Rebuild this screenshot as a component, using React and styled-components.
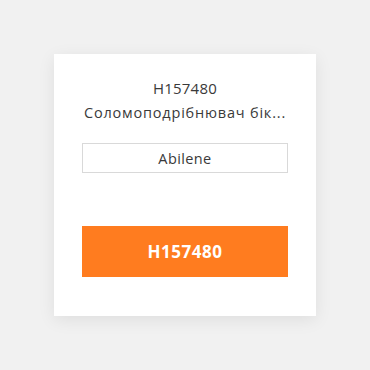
import styled, { createGlobalStyle } from "styled-components";

const Global = createGlobalStyle`
  body {
    margin: 0;
    background: #f1f1f1;
    font-family: "Open Sans", "Liberation Sans", sans-serif;
  }
`;

const Page = styled.div`
  width: 370px;
  height: 370px;
  display: flex;
  align-items: center;
  justify-content: center;
`;

const Card = styled.div`
  width: 262px;
  height: 262px;
  box-sizing: border-box;
  background: #ffffff;
  box-shadow: 0 4px 16px rgba(0, 0, 0, 0.08);
  padding: 24px 28px 0;
  display: flex;
  flex-direction: column;
  align-items: center;
`;

const Code = styled.div`
  font-size: 15px;
  color: #3a3a3a;
  line-height: 20px;
  letter-spacing: 0.2px;
`;

const Name = styled.div`
  margin-top: 5px;
  font-size: 14.5px;
  color: #3a3a3a;
  line-height: 20px;
  width: 100%;
  text-align: center;
  white-space: nowrap;
  letter-spacing: 0.8px;
`;

const Field = styled.div`
  margin-top: 20px;
  width: 100%;
  height: 30px;
  box-sizing: border-box;
  border: 1px solid #d9d9d9;
  display: flex;
  align-items: center;
  justify-content: center;
  font-size: 14.5px;
  color: #3a3a3a;
  letter-spacing: 0.4px;
`;

const Button = styled.button`
  margin-top: 53px;
  width: 100%;
  height: 51px;
  border: none;
  background: #ff7c1f;
  color: #ffffff;
  font-family: inherit;
  font-size: 17px;
  font-weight: 700;
  letter-spacing: 0.5px;
`;

export default function App() {
  return (
    <Page>
      <Global />
      <Card>
        <Code>H157480</Code>
        <Name>Соломоподрібнювач бік...</Name>
        <Field>Abilene</Field>
        <Button>H157480</Button>
      </Card>
    </Page>
  );
}
